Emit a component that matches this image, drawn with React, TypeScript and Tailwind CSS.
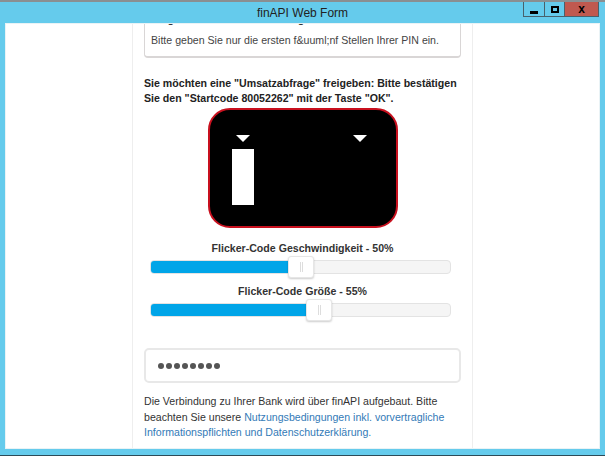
export default function App() {
  const Slider = ({ label, fill, thumb }: { label: string; fill: string; thumb: string }) => (
    <div className="flex flex-col">
      <div className="text-center text-[10.6px] leading-[15px] font-bold text-[#333]">{label}</div>
      <div className="relative ml-[6px] mt-[4px] h-[14px] w-[301px] rounded-[4px] border border-[#e3e3e3] bg-[#f5f5f5]">
        <div className={`h-full rounded-l-[3px] bg-[#00a5e8] ${fill}`} />
        <div className={`absolute top-[-5px] flex h-[22px] w-[26px] items-center justify-center gap-[1px] rounded-[3px] border border-[#e6e6e6] bg-white shadow-[0_1px_2px_rgba(0,0,0,0.2)] ${thumb}`}>
          <span className="h-[10px] w-px bg-[#ddd]" />
          <span className="h-[10px] w-px bg-[#ddd]" />
        </div>
      </div>
    </div>
  );
  return (
    <div className="flex h-[456px] w-[605px] flex-col overflow-hidden border-t-2 border-[#8a8f92] bg-[#65cbec] font-['Liberation_Sans',Arial,sans-serif]">
      <div className="relative flex h-[22px] shrink-0 items-center justify-center text-[12px] text-[#222]">
        finAPI Web Form
        <div className="absolute right-[6px] top-0 flex h-[15px] items-stretch border border-t-0 border-[#48616c]">
          <div className="flex w-[21px] items-end justify-center border-r border-[#48616c] pb-[2px]">
            <span className="h-[3px] w-[8px] bg-black" />
          </div>
          <div className="flex w-[20px] items-center justify-center border-r border-[#48616c]">
            <span className="h-[7px] w-[8px] border-2 border-black" />
          </div>
          <div className="flex w-[33px] items-center justify-center bg-[#c0594f] text-[12px] font-bold leading-none text-black">x</div>
        </div>
      </div>
      <div className="mx-[6px] flex min-h-0 flex-1 justify-center bg-white shadow-[0_0_0_1px_#e9f3f6]">
        <div className="flex w-[341px] flex-col overflow-hidden border-x-[1px] border-[#eeeeee] px-[11px]">
          <div className="-mt-[12px] h-[46px] w-[317px] shrink-0 rounded-b-[4px] border-x border-b-2 border-[#d9d6d6] pl-[6px] text-[10.6px] leading-[15px] text-[#444]">
            <div className="h-[15px] font-bold text-[#333]">Eingabe der Stellen: Anleitung</div>
            <div className="mt-[6px] whitespace-nowrap">Bitte geben Sie nur die ersten f&amp;uuml;nf Stellen Ihrer PIN ein.</div>
          </div>
          <div className="mt-[18px] text-[10.6px] leading-[15px] font-bold text-[#222]">
            Sie möchten eine "Umsatzabfrage" freigeben: Bitte bestätigen Sie den "Startcode 80052262" mit der Taste "OK".
          </div>
          <div className="relative mx-auto mt-[2px] h-[120px] w-[190px] shrink-0 rounded-[22px] border-2 border-[#c8101e] bg-black">
            <svg className="absolute left-[26px] top-[25px]" width="14" height="7" viewBox="0 0 14 7"><path d="M0 0H14L7 7Z" fill="#fff" /></svg>
            <svg className="absolute left-[143px] top-[25px]" width="14" height="7" viewBox="0 0 14 7"><path d="M0 0H14L7 7Z" fill="#fff" /></svg>
            <div className="absolute left-[22px] top-[39px] h-[56px] w-[22px] bg-white" />
          </div>
          <div className="mt-[13px]"><Slider label="Flicker-Code Geschwindigkeit - 50%" fill="w-[50%]" thumb="left-[137px]" /></div>
          <div className="mt-[10px]"><Slider label="Flicker-Code Größe - 55%" fill="w-[55%]" thumb="left-[155px]" /></div>
          <div className="mt-[31px] flex h-[35px] w-[317px] shrink-0 items-center gap-[2px] rounded-[5px] border-2 border-[#e8e8e8] pl-[12px]">
            {Array.from({ length: 8 }).map((_, i) => (
              <span key={i} className="h-[6px] w-[6px] rounded-full bg-[#555]" />
            ))}
          </div>
          <div className="mt-[11px] text-[10.6px] leading-[15.5px] text-[#333]">
            Die Verbindung zu Ihrer Bank wird über finAPI aufgebaut. Bitte beachten Sie unsere <span className="text-[#337ab7]">Nutzungsbedingungen inkl. vorvertragliche Informationspflichten und Datenschutzerklärung.</span>
          </div>
        </div>
      </div>
      <div className="h-[8px] shrink-0 border-b border-[#2c4a57]" />
    </div>
  );
}
